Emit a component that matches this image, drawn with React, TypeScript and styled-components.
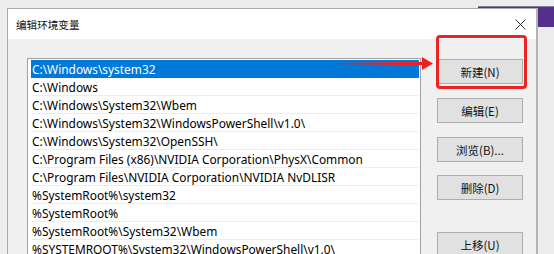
import React from "react";
import styled, { createGlobalStyle } from "styled-components";

const Global = createGlobalStyle`
  html, body { margin: 0; padding: 0; width: 554px; height: 254px; overflow: hidden; background: #ededed; }
  #root { width: 554px; height: 254px; }
`;

const Desktop = styled.div`
  position: relative;
  width: 554px;
  height: 254px;
  overflow: hidden;
  background: #ededed;
  padding: 8px 0 0 7px;
  box-sizing: border-box;
`;

const BackWindow = styled.div`
  position: absolute;
  left: 478px;
  top: 6px;
  width: 76px;
  height: 20px;
  background: #55308a;
  border-top: 1px solid #8a78a8;
`;

const Dialog = styled.div`
  position: relative;
  width: 531px;
  height: 300px;
  border: 1px solid #a9a9a9;
  border-right: 2px solid #b4b4b4;
  box-sizing: border-box;
  background: #f0f0f0;
  display: flex;
  flex-direction: column;
`;

const TitleBar = styled.div`
  height: 30px;
  background: #ffffff;
  display: flex;
  align-items: center;
  justify-content: space-between;
  padding: 0 10px 0 8px;
`;

const Title = styled.span`
  font-family: "Noto Sans CJK SC", "Noto Sans", sans-serif;
  font-size: 10.6px;
  color: #111;
`;

const Close = styled.svg`
  width: 11px;
  height: 11px;
  margin-top: 1px;
`;

const Body = styled.div`
  flex: 1;
  display: flex;
  align-items: flex-start;
  padding: 19px 0 0 19px;
  gap: 16px;
`;

const List = styled.div`
  width: 394px;
  height: 220px;
  box-sizing: border-box;
  background: #ffffff;
  border: 1px solid #a3a3a3;
  padding: 1px 1px 0 3px;
  display: flex;
  flex-direction: column;
`;

const Row = styled.div<{ $selected?: boolean }>`
  height: 18px;
  flex: none;
  box-sizing: border-box;
  display: flex;
  align-items: center;
  padding-left: 1px;
  border-bottom: 1px solid ${(p) => (p.$selected ? "#0078d7" : "#ececec")};
  background: ${(p) => (p.$selected ? "#0078d7" : "transparent")};
  color: ${(p) => (p.$selected ? "#ffffff" : "#000000")};
  font-family: "Noto Sans", "Noto Sans CJK SC", sans-serif;
  font-size: 11.9px;
  white-space: nowrap;
  overflow: hidden;
`;

const Buttons = styled.div`
  display: flex;
  flex-direction: column;
  margin-top: 1px;
`;

const Button = styled.button<{ $gap: number }>`
  width: 86px;
  height: 25px;
  margin: 0 0 ${(p) => p.$gap}px 0;
  padding: 0;
  background: #e1e1e1;
  border: 1px solid #adadad;
  font-family: "Noto Sans CJK SC", "Noto Sans", sans-serif;
  font-size: 11.5px;
  color: #111;
  display: flex;
  align-items: center;
  justify-content: center;
`;

const Highlight = styled.div`
  position: absolute;
  left: 436px;
  top: 35px;
  width: 91px;
  height: 54px;
  box-sizing: border-box;
  border: 3px solid #ee2323;
  border-radius: 4px;
`;

const Arrow = styled.svg`
  position: absolute;
  left: 336px;
  top: 56px;
  width: 98px;
  height: 15px;
`;

const paths = [
  "C:\\Windows\\system32",
  "C:\\Windows",
  "C:\\Windows\\System32\\Wbem",
  "C:\\Windows\\System32\\WindowsPowerShell\\v1.0\\",
  "C:\\Windows\\System32\\OpenSSH\\",
  "C:\\Program Files (x86)\\NVIDIA Corporation\\PhysX\\Common",
  "C:\\Program Files\\NVIDIA Corporation\\NVIDIA NvDLISR",
  "%SystemRoot%\\system32",
  "%SystemRoot%",
  "%SystemRoot%\\System32\\Wbem",
  "%SYSTEMROOT%\\System32\\WindowsPowerShell\\v1.0\\",
];

const buttons: { label: string; gap: number }[] = [
  { label: "新建(N)", gap: 14 },
  { label: "编辑(E)", gap: 14 },
  { label: "浏览(B)...", gap: 13 },
  { label: "删除(D)", gap: 32 },
  { label: "上移(U)", gap: 14 },
];

export default function App() {
  return (
    <>
      <Global />
      <Desktop>
        <BackWindow />
        <Dialog>
          <TitleBar>
            <Title>编辑环境变量</Title>
            <Close viewBox="0 0 11 11">
              <path d="M0.5 0.5 L10.5 10.5 M10.5 0.5 L0.5 10.5" stroke="#333" strokeWidth="1" fill="none" />
            </Close>
          </TitleBar>
          <Body>
            <List>
              {paths.map((p, i) => (
                <Row key={i} $selected={i === 0}>
                  {p}
                </Row>
              ))}
            </List>
            <Buttons>
              {buttons.map((b) => (
                <Button key={b.label} $gap={b.gap}>
                  {b.label}
                </Button>
              ))}
            </Buttons>
          </Body>
        </Dialog>
        <Arrow viewBox="0 0 98 15">
          <defs>
            <linearGradient id="ag" x1="0" y1="0" x2="1" y2="0">
              <stop offset="0" stopColor="#f01e1e" stopOpacity="0" />
              <stop offset="0.75" stopColor="#f01e1e" stopOpacity="1" />
            </linearGradient>
          </defs>
          <rect x="0" y="6" width="88" height="3" fill="url(#ag)" />
          <polygon points="86,1 97,7.5 86,14" fill="#f01e1e" />
        </Arrow>
        <Highlight />
      </Desktop>
    </>
  );
}
